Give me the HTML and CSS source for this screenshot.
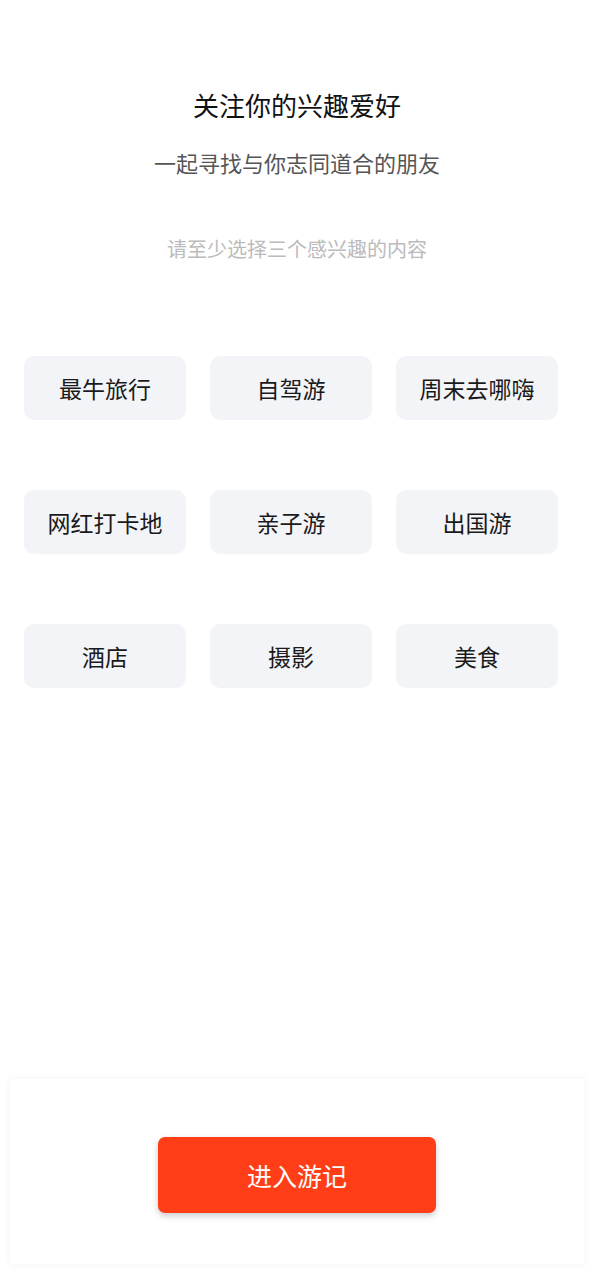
FILE: index.html
```html
<!DOCTYPE html>
<html lang="zh-CN">

<head>
  <meta charset="UTF-8">
  <meta name="viewport" content="width=device-width, initial-scale=1.0">
  <title>选择兴趣</title>
  <link rel="stylesheet" href="styles.css">
</head>

<body>
  <div class="page">
    <div class="header">
      <h1 class="title">关注你的兴趣爱好</h1>
      <p class="subtitle">一起寻找与你志同道合的朋友</p>
      <p class="hint">请至少选择三个感兴趣的内容</p>
    </div>
    <ul class="tags">
      <li>最牛旅行</li>
      <li>自驾游</li>
      <li>周末去哪嗨</li>
      <li>网红打卡地</li>
      <li>亲子游</li>
      <li>出国游</li>
      <li>酒店</li>
      <li>摄影</li>
      <li>美食</li>
    </ul>
    <div class="footer">
      <button class="enter-btn">进入游记</button>
    </div>
  </div>
</body>

</html>
```

FILE: styles.css
```css
body,
h1,
p,
ul,
li {
  margin: 0;
  padding: 0;
  box-sizing: border-box;
}
ul {
  list-style: none;
}
body {
  background-color: #fff;
  font-family: "Noto Sans CJK SC", "Noto Sans", sans-serif;
}
.page {
  display: flex;
  flex-direction: column;
  height: 100vh;
}
.header {
  padding-top: 87px;
  text-align: center;
}
.title {
  font-size: 26px;
  line-height: 36px;
  font-weight: normal;
  color: #111;
}
.subtitle {
  margin-top: 24px;
  font-size: 22px;
  line-height: 30px;
  color: #555;
}
.hint {
  margin-top: 57px;
  font-size: 20px;
  line-height: 30px;
  color: #bbb;
}
.tags {
  display: grid;
  grid-template-columns: repeat(3, 162px);
  column-gap: 24px;
  row-gap: 70px;
  margin-top: 92px;
  padding: 0 24px;
}
.tags li {
  height: 64px;
  line-height: 64px;
  text-align: center;
  font-size: 23px;
  color: #1a1a1a;
  background-color: #f3f4f8;
  border-radius: 10px;
  cursor: pointer;
}
.footer {
  margin: auto 10px 16px;
  padding: 58px 0 51px;
  display: flex;
  justify-content: center;
  background-color: #fff;
  box-shadow: 0 0 8px rgba(0, 0, 0, .06);
}
.enter-btn {
  width: 278px;
  height: 76px;
  border: none;
  border-radius: 7px;
  background-color: #ff3e17;
  color: #fff;
  font-family: inherit;
  font-size: 25px;
  box-shadow: 0 3px 6px rgba(0, 0, 0, .2);
  cursor: pointer;
}
```
